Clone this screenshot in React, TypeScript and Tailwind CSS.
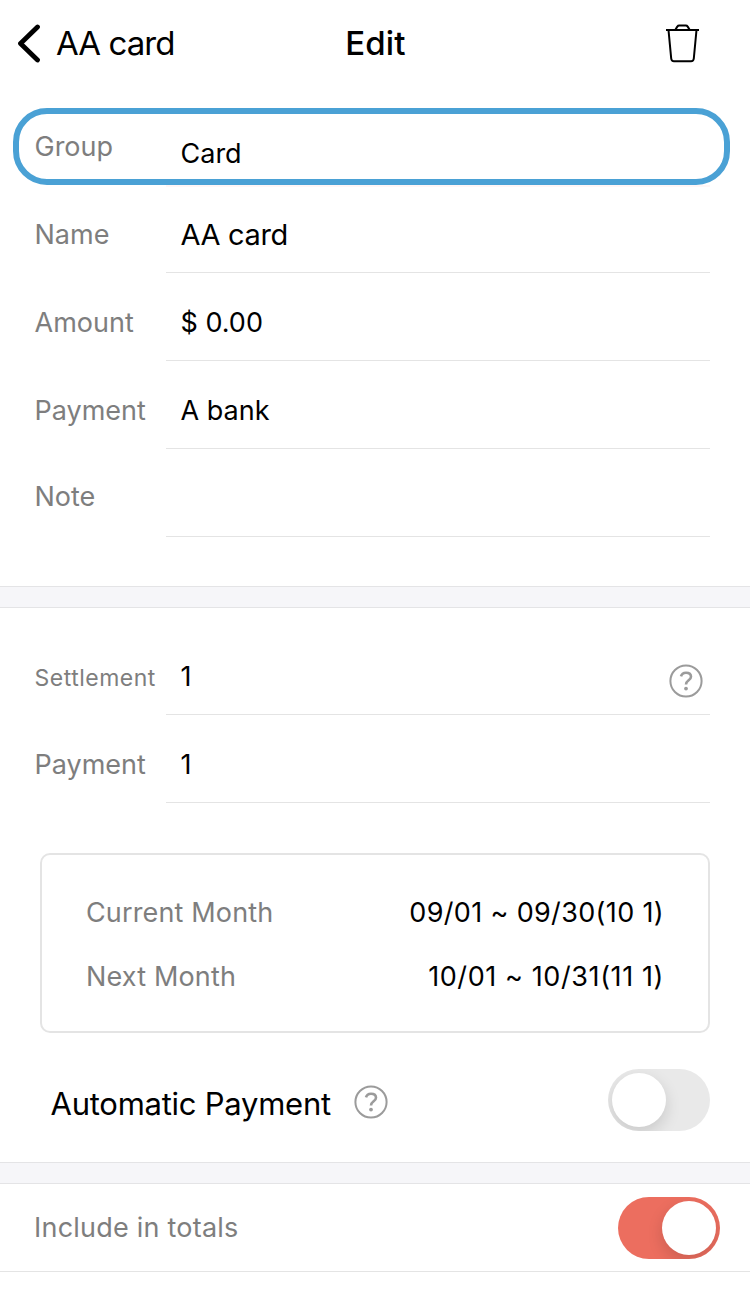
import React, { useState } from "react";

const QuestionIcon = () => {
  return <svg className="w-[34px] h-[34px] shrink-0" viewBox="0 0 34 34" fill="none">
      <circle cx="17" cy="17" r="15.6" stroke="#9b9b9b" strokeWidth="2" />
      <path d="M12 12.4C12.6 9.9 14.5 8.7 17 8.7C20 8.7 22 10.3 22 12.7C22 16.2 17 16.4 17 20.4" stroke="#9b9b9b" strokeWidth="2.6" />
      <circle cx="17" cy="24.6" r="1.9" fill="#9b9b9b" />
    </svg>;
};

const Toggle = ({ on, onChange }: { on: boolean; onChange: () => void }) => {
  return <button onClick={onChange} className={`flex items-center w-[102px] h-[62px] p-1 rounded-full overflow-hidden shrink-0 ${on ? "justify-end bg-[#ec6e5f]" : "justify-start bg-[#e9e9e9]"}`}>
      <span className="w-[54px] h-[54px] rounded-full bg-white shadow-[0_6px_16px_rgba(0,0,0,0.14)]" />
    </button>;
};

const Band = () => <div className="h-[22px] border-y border-[#e4e4e6] bg-[#f6f6f9]" />;

type RowProps = {
  label: string;
  labelClass?: string;
  value?: string;
  valueClass?: string;
  help?: boolean;
};

const Row = ({ label, labelClass = "text-[27px]", value, valueClass = "text-[27px]", help }: RowProps) => {
  return <div className="flex h-[88px] pl-[34px] pr-10">
      <div className="flex items-center w-[132px] pt-[11px] pl-[0.5px] pb-px shrink-0 text-[#7e7e7e]">
        <span className={labelClass}>{label}</span>
      </div>
      <div className="flex items-center justify-between flex-1 pt-[11px] pl-[14.5px] pr-[7px] border-b border-[#e4e4e4]">
        <span className={valueClass}>{value}</span>
        {help && <div className="pt-[9px]"><QuestionIcon /></div>}
      </div>
    </div>;
};

const months = [
  { label: "Current Month", range: "09/01 ~ 09/30(10 1)", className: "tracking-[0.35px]" },
  { label: "Next Month", range: "10/01 ~ 10/31(11 1)", className: "tracking-[0.6px]" }
];

export default function App() {
  const [autoPay, setAutoPay] = useState(false);
  const [include, setInclude] = useState(true);
  return <div className="w-[750px] h-[1293px] overflow-hidden bg-white text-black whitespace-nowrap font-['Inter',sans-serif] leading-none [font-feature-settings:'calt'_0]">
      <header className="grid grid-cols-3 items-center h-[87px] pl-[17px] pr-[50px]">
        <button className="flex items-center gap-[15px]">
          <svg className="w-6 h-10" viewBox="0 0 24 40" fill="none" stroke="black" strokeWidth="4.8" strokeLinecap="round" strokeLinejoin="round">
            <path d="M20.5 3L3.5 19.5L20.5 36" />
          </svg>
          <span className="text-[33px] tracking-[-0.95px]">AA card</span>
        </button>
        <h1 className="pl-[34px] text-center text-[33px] font-medium tracking-[0.2px]">Edit</h1>
        <button className="justify-self-end">
          <svg className="w-[35px] h-10" viewBox="0 0 35 40" fill="none" stroke="black" strokeWidth="2" strokeLinejoin="round">
            <path d="M1 6H34" />
            <path d="M10.5 5.5L12.3 2.6Q13 1.6 14.2 1.6H20.8Q22 1.6 22.7 2.6L24.5 5.5" />
            <path d="M3.5 6L6.2 34.5Q6.5 37.3 9 37.3H26Q28.5 37.3 28.8 34.5L31.5 6" />
          </svg>
        </button>
      </header>

      <div className="flex h-[77px] mt-[21px] ml-[13px] mr-5 border-[6px] border-[#4aa1d5] rounded-[34px]">
        <span className="w-[146px] pt-[19px] pl-[15.5px] text-[27px] text-[#7e7e7e]">Group</span>
        <span className="pt-[26px] pl-[15.5px] text-[27px]">Card</span>
      </div>

      {/* faint tail of the active underline */}
      <div className="h-[2px] -mb-[2px] ml-[166px] mr-10 bg-[#fff6f6]" />

      <Row label="Name" value="AA card" valueClass="text-[29px] tracking-[-0.35px]" />
      <Row label="Amount" value="$ 0.00" />
      <Row label="Payment" value="A bank" />
      <Row label="Note" labelClass="text-[27px] -mt-1" />

      <div className="h-[49px]" />
      <Band />
      <div className="h-[19px]" />

      <Row label="Settlement" labelClass="text-[23px] mt-[4px] tracking-[0.5px]" value="1" help />
      <Row label="Payment" value="1" />

      <div className="h-[180px] mt-[50px] mx-10 px-11 pt-[25px] border-2 border-[#e4e4e4] rounded-[10px]">
        {months.map(month => <div key={month.label} className="flex items-center justify-between h-16 text-[27px]">
            <span className="text-[#7e7e7e] tracking-[0.15px]">{month.label}</span>
            <span className={month.className}>{month.range}</span>
          </div>)}
      </div>

      <div className="flex items-center h-[129px] pt-1 pl-[50.5px] pr-10">
        <span className="pt-[7px] text-[31px] tracking-[-0.25px]">Automatic Payment</span>
        <div className="flex-1 pt-[4px] pl-[23px]"><QuestionIcon /></div>
        <Toggle on={autoPay} onChange={() => setAutoPay(!autoPay)} />
      </div>
      <Band />
      <div className="flex items-center justify-between h-[88px] pl-[34px] pr-[30px] border-b border-[#e4e4e4]">
        <span className="text-[27px] tracking-[0.22px] text-[#7e7e7e]">Include in totals</span>
        <Toggle on={include} onChange={() => setInclude(!include)} />
      </div>
    </div>;
}
